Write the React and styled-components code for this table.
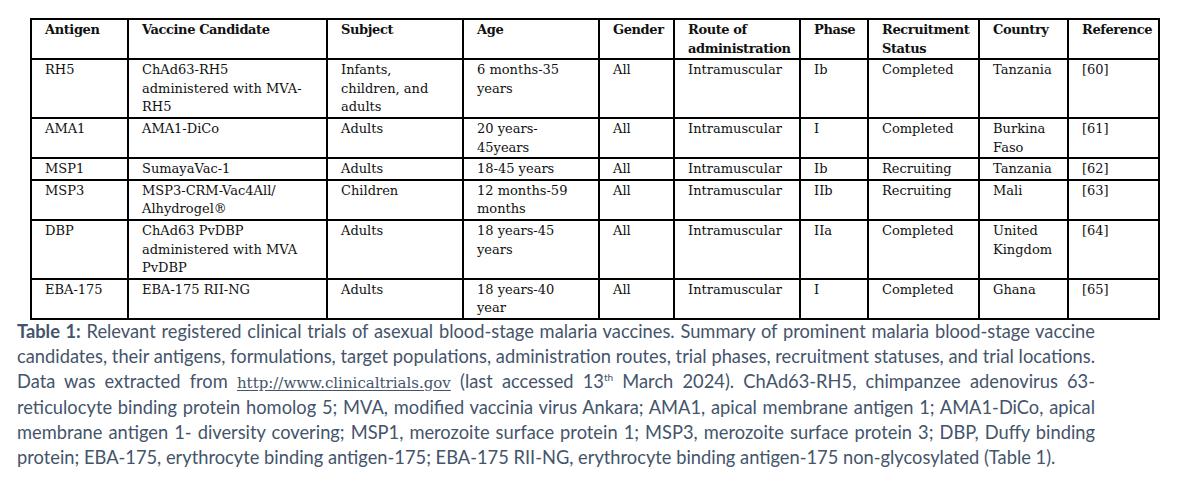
import styled, { createGlobalStyle } from "styled-components";

const GlobalStyle = createGlobalStyle`
  html, body {
    margin: 0;
    padding: 0;
    background: #ffffff;
  }
`;

const Page = styled.div`
  width: 1192px;
  height: 495px;
  box-sizing: border-box;
  padding: 18px 0 0 17px;
  overflow: hidden;
`;

const Table = styled.table`
  margin-left: 13px;
  width: 1128px;
  table-layout: fixed;
  border-collapse: collapse;
  border: 2px solid #000;
  font-family: "DejaVu Serif", "Liberation Serif", serif;
  font-size: 13px;
  line-height: 18.6px;
  color: #111;
`;

const Cell = styled.td`
  border: 2px solid #000;
  padding: 1px 0 0 13px;
  vertical-align: top;
  white-space: nowrap;
  text-align: left;
  font-weight: ${({ $head }) => ($head ? 700 : 400)};
  letter-spacing: ${({ $head }) => ($head ? "-0.4px" : "0")};
`;

const Caption = styled.div`
  width: 1078px;
  margin-top: -1px;
  font-family: Lato, "Liberation Sans", sans-serif;
  font-size: 18.3px;
  line-height: 24.8px;
  color: #44546a;
`;

const Line = styled.div`
  text-align: ${({ $last }) => ($last ? "left" : "justify")};
  text-align-last: ${({ $last }) => ($last ? "left" : "justify")};
  white-space: nowrap;
  word-spacing: ${({ $tight }) => ($tight ? "-1px" : "0")};
`;

const Label = styled.b`
  font-weight: 700;
`;

const Link = styled.a`
  color: #44546a;
  text-decoration: underline;
  text-underline-offset: 2px;
  font-family: "DejaVu Serif", serif;
  font-size: 15px;
`;

const Sup = styled.sup`
  font-size: 10px;
  line-height: 0;
`;

const widths = [97, 199, 136, 136, 75, 126, 68, 111, 89, 91];

const head = [
  ["Antigen"],
  ["Vaccine Candidate"],
  ["Subject"],
  ["Age"],
  ["Gender"],
  ["Route of", "administration"],
  ["Phase"],
  ["Recruitment", "Status"],
  ["Country"],
  ["Reference"],
];

const rows = [
  [
    ["RH5"],
    ["ChAd63-RH5", "administered with MVA-", "RH5"],
    ["Infants,", "children, and", "adults"],
    ["6 months-35", "years"],
    ["All"],
    ["Intramuscular"],
    ["Ib"],
    ["Completed"],
    ["Tanzania"],
    ["[60]"],
  ],
  [
    ["AMA1"],
    ["AMA1-DiCo"],
    ["Adults"],
    ["20 years-", "45years"],
    ["All"],
    ["Intramuscular"],
    ["I"],
    ["Completed"],
    ["Burkina", "Faso"],
    ["[61]"],
  ],
  [
    ["MSP1"],
    ["SumayaVac-1"],
    ["Adults"],
    ["18-45 years"],
    ["All"],
    ["Intramuscular"],
    ["Ib"],
    ["Recruiting"],
    ["Tanzania"],
    ["[62]"],
  ],
  [
    ["MSP3"],
    ["MSP3-CRM-Vac4All/", "Alhydrogel®"],
    ["Children"],
    ["12 months-59", "months"],
    ["All"],
    ["Intramuscular"],
    ["IIb"],
    ["Recruiting"],
    ["Mali"],
    ["[63]"],
  ],
  [
    ["DBP"],
    ["ChAd63 PvDBP", "administered with MVA", "PvDBP"],
    ["Adults"],
    ["18 years-45", "years"],
    ["All"],
    ["Intramuscular"],
    ["IIa"],
    ["Completed"],
    ["United", "Kingdom"],
    ["[64]"],
  ],
  [
    ["EBA-175"],
    ["EBA-175 RII-NG"],
    ["Adults"],
    ["18 years-40", "year"],
    ["All"],
    ["Intramuscular"],
    ["I"],
    ["Completed"],
    ["Ghana"],
    ["[65]"],
  ],
];

const CellText = ({ lines }) =>
  lines.map((l, i) => (
    <span key={i}>
      {i > 0 && <br />}
      {l}
    </span>
  ));

const App = () => {
  return (
    <Page>
      <GlobalStyle />
      <Table>
        <colgroup>
          {widths.map((w, i) => (
            <col key={i} style={{ width: w }} />
          ))}
        </colgroup>
        <thead>
          <tr>
            {head.map((h, i) => (
              <Cell as="th" key={i} $head>
                <CellText lines={h} />
              </Cell>
            ))}
          </tr>
        </thead>
        <tbody>
          {rows.map((r, ri) => (
            <tr key={ri}>
              {r.map((c, ci) => (
                <Cell key={ci}>
                  <CellText lines={c} />
                </Cell>
              ))}
            </tr>
          ))}
        </tbody>
      </Table>
      <Caption>
        <Line>
          <Label>Table 1:</Label> Relevant registered clinical trials of asexual
          blood-stage malaria vaccines. Summary of prominent malaria blood-stage
          vaccine
        </Line>
        <Line $tight>
          candidates, their antigens, formulations, target populations,
          administration routes, trial phases, recruitment statuses, and trial
          locations.
        </Line>
        <Line>
          Data was extracted from{" "}
          <Link href="#">http://www.clinicaltrials.gov</Link> (last accessed
          13<Sup>th</Sup> March 2024). ChAd63-RH5, chimpanzee adenovirus 63-
        </Line>
        <Line>
          reticulocyte binding protein homolog 5; MVA, modified vaccinia virus
          Ankara; AMA1, apical membrane antigen 1; AMA1-DiCo, apical
        </Line>
        <Line>
          membrane antigen 1- diversity covering; MSP1, merozoite surface
          protein 1; MSP3, merozoite surface protein 3; DBP, Duffy binding
        </Line>
        <Line $last>
          protein; EBA-175, erythrocyte binding antigen-175; EBA-175 RII-NG,
          erythrocyte binding antigen-175 non-glycosylated (Table 1).
        </Line>
      </Caption>
    </Page>
  );
};

export default App;
